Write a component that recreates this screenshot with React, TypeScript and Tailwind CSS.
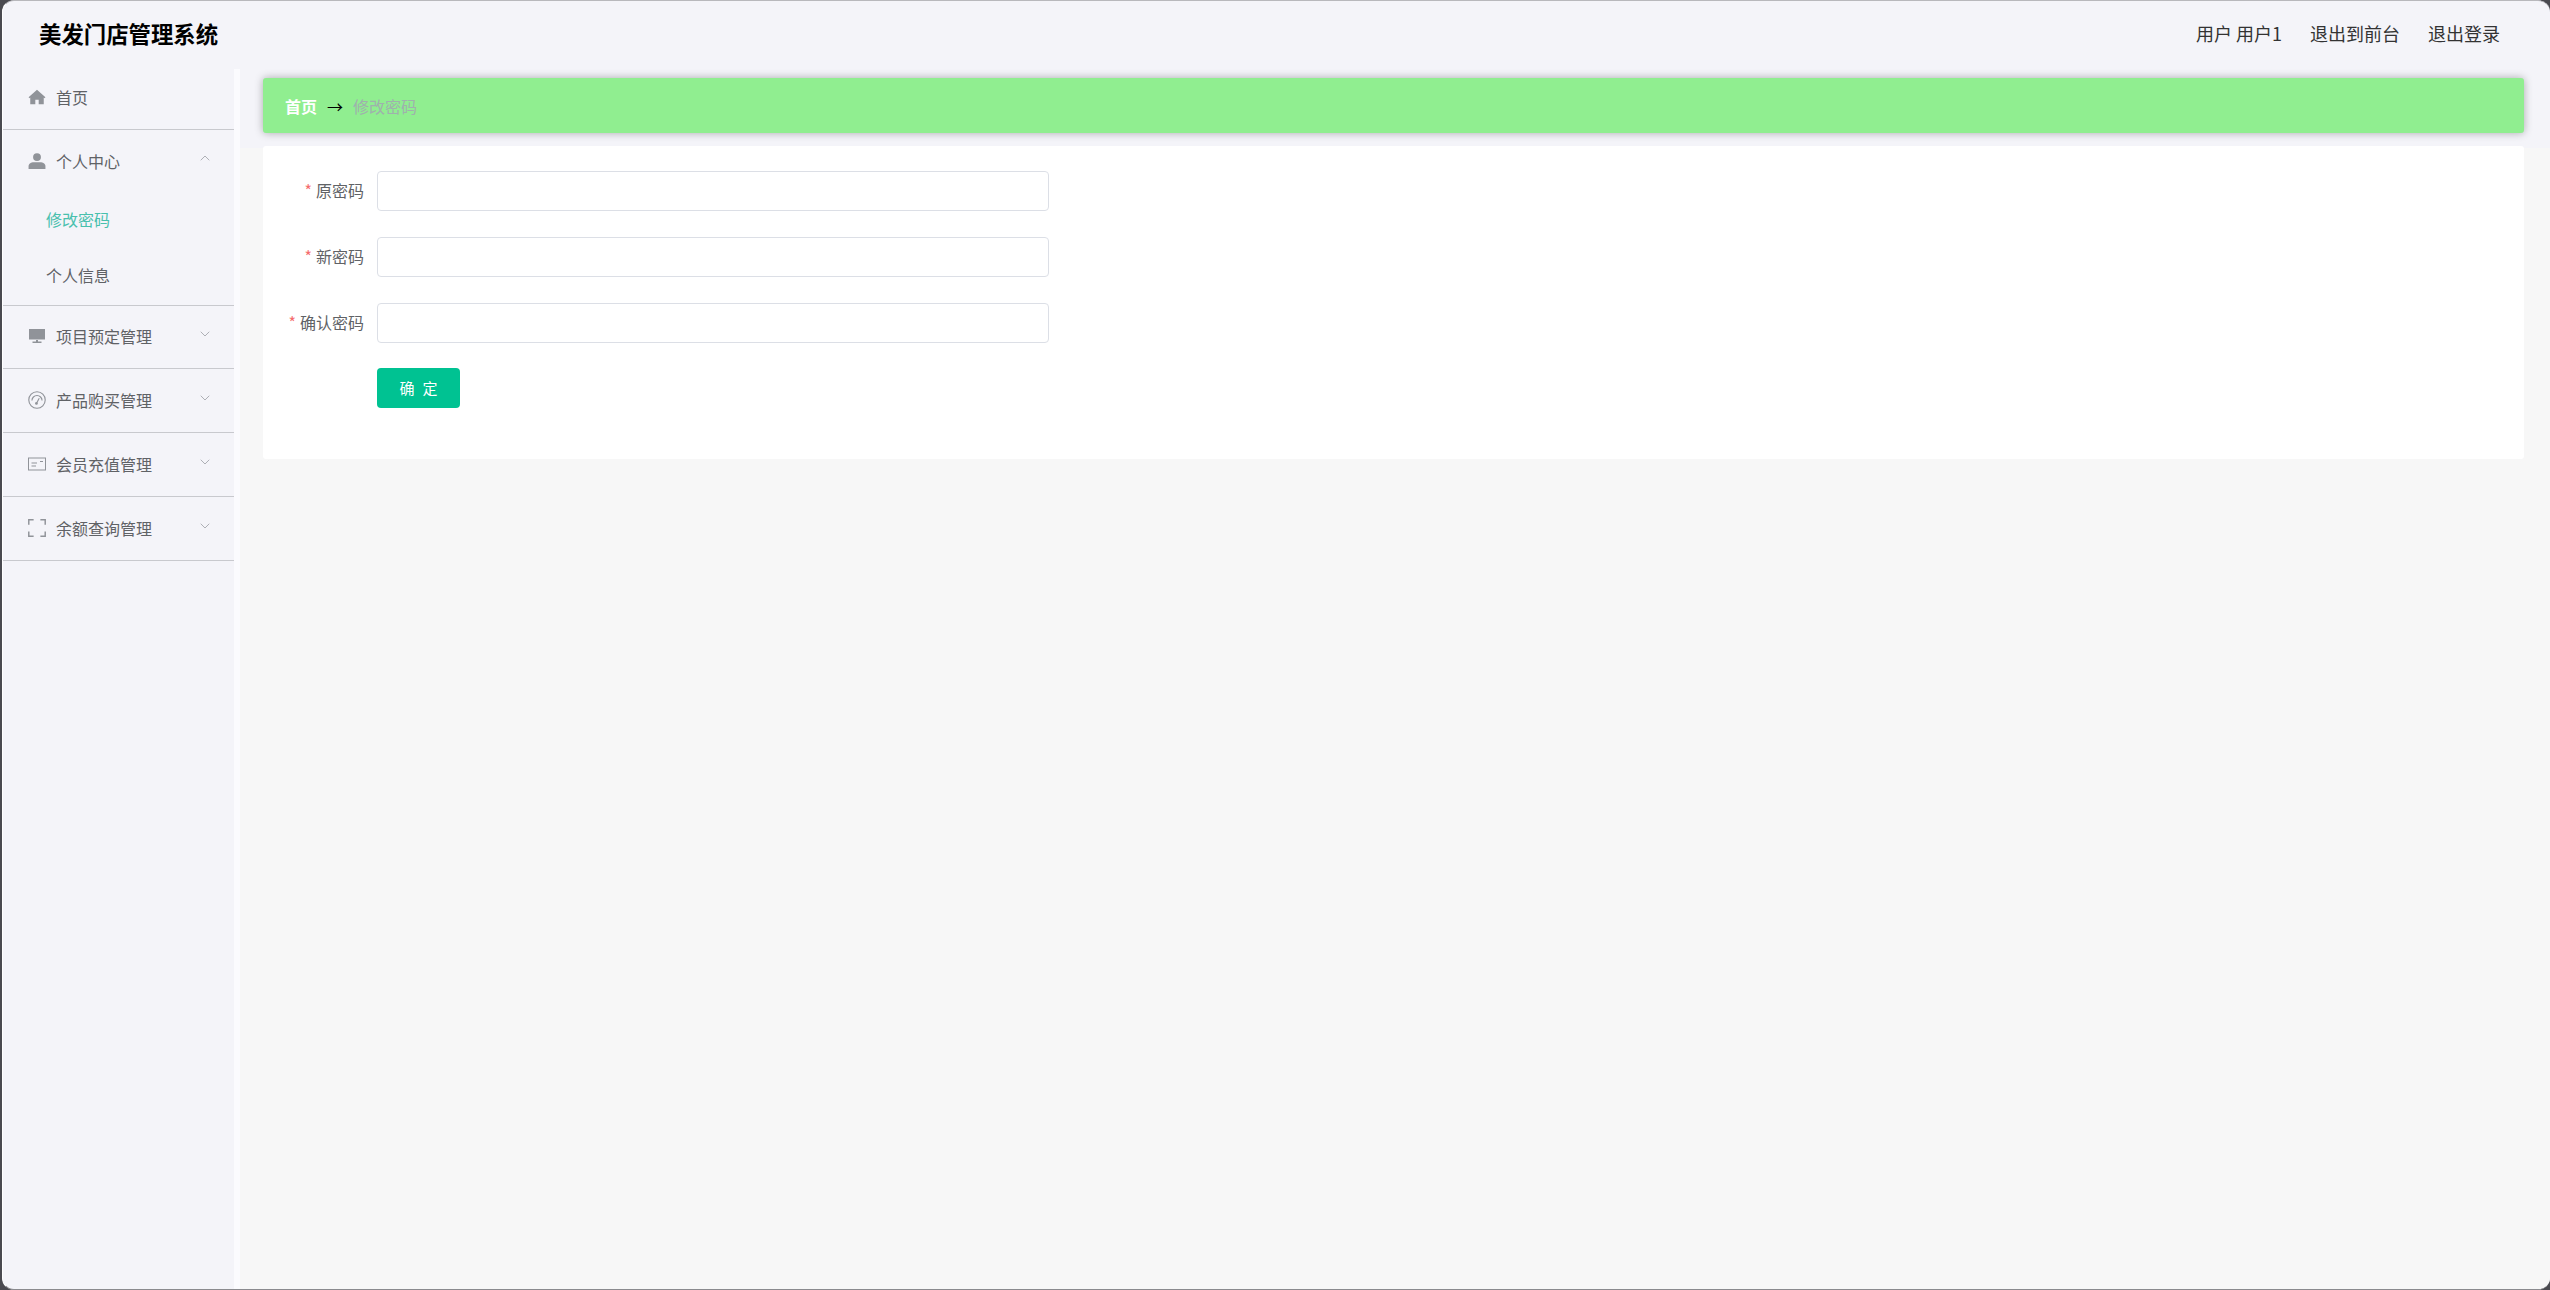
import React from "react"
import { ChevronDown, ChevronUp } from "lucide-react"

const font = "font-['Microsoft_YaHei','Noto_Sans_CJK_SC','Liberation_Sans',sans-serif]"

const HomeIcon = () => (
    <svg viewBox="0 0 16 16" className="w-[18px] h-[18px] fill-[#909399]">
        <path d="M8 1.5 0.5 8.2 1.3 9 2 8.5V14.5H6.5V10.5H9.5V14.5H14V8.5L14.7 9 15.5 8.2Z" />
    </svg>
)

const UserIcon = () => (
    <svg viewBox="0 0 16 16" className="w-[18px] h-[18px] fill-[#909399]">
        <circle cx="8" cy="4.5" r="3.5" />
        <path d="M0.5 15V12.5C0.5 10 3 9 5 9H11C13 9 15.5 10 15.5 12.5V15Z" />
    </svg>
)

const MonitorIcon = () => (
    <svg viewBox="0 0 16 16" className="w-4 h-4 ml-px fill-[#909399]">
        <path d="M0 1H16V11.5H0ZM7 12H9V13.5H12.5V15H3.5V13.5H7Z" />
    </svg>
)

const GaugeIcon = () => (
    <svg viewBox="0 0 16 16" className="w-[18px] h-[18px] fill-none stroke-[#909399]">
        <circle cx="8" cy="8" r="7.3" strokeWidth="1" />
        <path d="M3.5 8.5A4.5 4.5 0 0 1 12.5 8.5" strokeWidth="1" />
        <circle cx="7.5" cy="11" r="1.2" className="fill-[#909399]" strokeWidth="0" />
        <path d="M7.8 10.5 10 6.5" strokeWidth="1" />
    </svg>
)

const PostcardIcon = () => (
    <svg viewBox="0 0 18 14" className="w-[18px] h-[14px] fill-none stroke-[#909399]">
        <rect x="0.5" y="1" width="17" height="12" strokeWidth="1" />
        <path d="M3.5 6H9M3.5 9H8M12 4.5H15" strokeWidth="1" />
    </svg>
)

const FullScreenIcon = () => (
    <svg viewBox="0 0 16 16" className="w-[18px] h-[18px] fill-none stroke-[#909399]">
        <path d="M0.7 5V0.7H5M11 0.7H15.3V5M15.3 11V15.3H11M5 15.3H0.7V11" strokeWidth="1.3" />
    </svg>
)

const menus = [
    { title: "项目预定管理", icon: <MonitorIcon />, height: "h-[63px]" },
    { title: "产品购买管理", icon: <GaugeIcon />, height: "h-[64px]" },
    { title: "会员充值管理", icon: <PostcardIcon />, height: "h-[64px]" },
    { title: "余额查询管理", icon: <FullScreenIcon />, height: "h-[64px]" },
]

const fields = ["原密码", "新密码", "确认密码"]

const MenuTitle = ({ icon, title, open }: { icon: React.ReactNode; title: string; open?: boolean }) => (
    <div className="flex items-center h-full pl-[25px] pr-[21px] pb-[2px]">
        <span className="w-[28px] flex items-center">{icon}</span>
        <span className="text-base text-[#606266]">{title}</span>
        <span className={open ? "ml-auto -mt-[6px]" : "ml-auto -mt-[4px]"}>
            {open ? (
                <ChevronUp size={16} strokeWidth={1.4} className="text-[#a8aab0]" />
            ) : (
                <ChevronDown size={16} strokeWidth={1.4} className="text-[#a8aab0]" />
            )}
        </span>
    </div>
)

export default function App() {
    return (
        <div className={`h-[1290px] w-[2550px] overflow-hidden bg-[#4a4a50] pl-[2px] ${font}`}>
            <div className="h-full flex flex-col rounded-[12px] border-l border-t border-b border-l-[#ffffff] border-t-[#b8b8bc] border-b-[#8a8a8e] bg-[#f4f4f9] overflow-hidden">
                {/* Header */}
                <div className="h-[68px] shrink-0 flex items-center justify-between pl-[36px] pr-[50px] pb-[2px]">
                    <div className="text-[22.4px] font-bold text-black">美发门店管理系统</div>
                    <div className="flex gap-[28px] text-[18px] text-[#333333] -mt-[2px]">
                        <span>用户 用户1</span>
                        <span>退出到前台</span>
                        <span>退出登录</span>
                    </div>
                </div>

                <div className="flex-1 flex min-h-0">
                    {/* Sidebar */}
                    <div className="w-[231px] shrink-0 flex flex-col">
                        <div className="h-[61px] border-b border-[#c8c9ce]">
                            <div className="flex items-center h-full pl-[25px] pb-[4px]">
                                <span className="w-[28px] flex items-center"><HomeIcon /></span>
                                <span className="text-base text-[#606266]">首页</span>
                            </div>
                        </div>
                        <div className="h-[176px] border-b border-[#c8c9ce]">
                            <div className="h-[64px]">
                                <MenuTitle icon={<UserIcon />} title="个人中心" open />
                            </div>
                            <div className="h-[56px] flex items-center pl-[43px] pb-[6px] text-base text-[#48c0ad]">修改密码</div>
                            <div className="h-[56px] flex items-center pl-[43px] pb-[6px] text-base text-[#606266]">个人信息</div>
                        </div>
                        {menus.map((menu) => (
                            <div key={menu.title} className={`${menu.height} border-b border-[#c8c9ce]`}>
                                <MenuTitle icon={menu.icon} title={menu.title} />
                            </div>
                        ))}
                    </div>

                    {/* Main */}
                    <div className="flex-1 border-l-[6px] border-[#fbfbfe] bg-[#f7f7f7]">
                        <div className="bg-[#f4f4f9] h-[79px] -mb-[2px] pl-[23px] pr-[26px] pt-[9px]">
                            <div className="h-[55px] rounded-[3px] bg-[#90ee90] shadow-[0_0_8px_rgba(0,0,0,0.3)] flex items-center pl-[22px] text-base">
                                <span className="font-bold text-white">首页</span>
                                <span className="mx-[10px] text-black">→</span>
                                <span className="text-[#9fb1ad]">修改密码</span>
                            </div>
                        </div>
                        <div className="ml-[23px] mr-[26px] h-[313px] rounded-[3px] bg-white pt-[25px]">
                            {fields.map((field) => (
                                <div key={field} className="flex items-center h-[40px] mb-[26px]">
                                    <label className="w-[114px] text-right pr-[13px] pb-[2px] text-base text-[#606266]">
                                        <span className="text-[#f56c6c] mr-[4px]">*</span>
                                        {field}
                                    </label>
                                    <input
                                        type="text"
                                        className="w-[672px] h-[40px] rounded-[4px] border border-[#dcdfe6] bg-white"
                                    />
                                </div>
                            ))}
                            <button
                                type="button"
                                className="ml-[114px] -mt-px block w-[83px] h-[40px] rounded-[4px] bg-[#00c292] text-white text-[15px] tracking-[8px] pl-[8px]"
                            >
                                确定
                            </button>
                        </div>
                    </div>
                </div>
            </div>
        </div>
    )
}
